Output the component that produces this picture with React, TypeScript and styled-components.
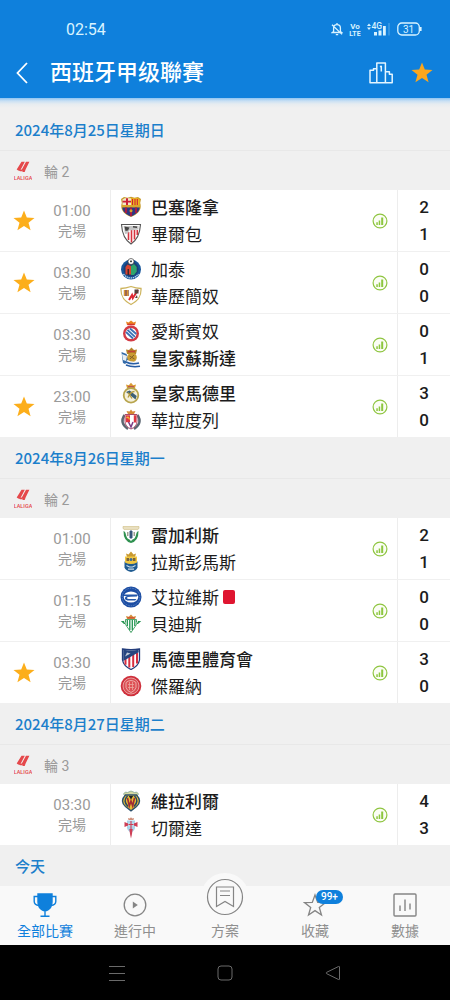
import React, { useState } from "react";
import styled, { createGlobalStyle } from "styled-components";

const BLUE = "#0f80dc";

const GlobalStyle = createGlobalStyle`
  *, *::before, *::after { box-sizing: border-box; }
  body {
    margin: 0;
    background: #f0f0f0;
    font-family: Roboto, "Noto Sans CJK TC", sans-serif;
    color: #1c1c1c;
  }
  button { font: inherit; color: inherit; background: none; border: 0; padding: 0; cursor: pointer; }
  h1, h2, h3, p, ul { margin: 0; padding: 0; }
  ul { list-style: none; }
  svg { display: block; }
`;

/* ---------- layout ---------- */

const Screen = styled.div`
  display: flex;
  flex-direction: column;
  height: 100vh;
`;

const Header = styled.header`
  flex: none;
  background: ${BLUE};
  color: #fff;
`;

const StatusBar = styled.div`
  display: flex;
  align-items: center;
  justify-content: space-between;
  height: 48px;
  padding: 10px 28px 0 66px;
  font-size: 16px;
  color: #d9f3ff;
`;

const StatusIcons = styled.div`
  display: flex;
  align-items: center;
  gap: 6px;
`;

const TitleBar = styled.div`
  display: flex;
  align-items: center;
  height: 50px;
  padding: 0 16px 0 10px;
`;

const IconButton = styled.button`
  display: flex;
  align-items: center;
  justify-content: center;
  width: 24px;
  height: 32px;
`;

const Title = styled.h1`
  flex: 1;
  padding-left: 16px;
  font-size: 22px;
  line-height: 34px;
  font-weight: 500;
`;

const Actions = styled.div`
  display: flex;
  gap: 17px;
`;

const Schedule = styled.main`
  flex: 1;
  min-height: 0;
  overflow-y: auto;
  scrollbar-width: none;
  padding-top: 12px;
  background: linear-gradient(#8fc4f1 0, #c9e0f4 3px, #e6ecf0 6px, #f0f0f0 10px);
`;

const DayTitle = styled.h2`
  padding: 0 15px;
  font-family: "Noto Sans CJK TC", sans-serif;
  font-size: 15px;
  line-height: 40px;
  font-weight: 500;
  color: #1c7fcb;
`;

const Round = styled.h3`
  display: flex;
  align-items: center;
  gap: 12px;
  height: 40px;
  padding: 0 14px;
  border-top: 1px solid #e8e8e8;
  font-size: 14px;
  font-weight: 400;
  color: #9a9a9a;
`;

const MatchRow = styled.li`
  display: flex;
  height: 62px;
  background: #fff;
  border-bottom: 1px solid #f0f0f0;
`;

const FavouriteCell = styled.button`
  display: flex;
  align-items: center;
  justify-content: center;
  width: 48px;
`;

const TimeCell = styled.div`
  display: flex;
  flex-direction: column;
  justify-content: center;
  align-items: center;
  width: 63px;
  padding-right: 14px;
  border-right: 1px solid #ededed;
  line-height: 20px;
  color: #9a9a9a;
`;

const Kickoff = styled.time`
  font-size: 15px;
`;

const Phase = styled.span`
  font-size: 14px;
`;

const Teams = styled.div`
  flex: 1;
  padding: 3px 0 0 9px;
`;

const Team = styled.div<{ $winner: boolean }>`
  display: flex;
  align-items: center;
  height: 27px;
  font-size: 17px;
  font-weight: ${(p) => (p.$winner ? 500 : 400)};
`;

const CrestSvg = styled.svg`
  width: 22px;
  height: 22px;
  margin-right: 9px;
`;

const RedCard = styled.span`
  width: 12px;
  height: 14px;
  margin-left: 4px;
  border-radius: 2px;
  background: #df1530;
`;

const StatsCell = styled.button`
  display: flex;
  align-items: center;
  justify-content: center;
  width: 34px;
`;

const Scores = styled.div`
  display: flex;
  flex-direction: column;
  align-items: center;
  width: 53px;
  padding-top: 4px;
  border-left: 1px solid #ededed;
  font-size: 17px;
  line-height: 27px;
  font-weight: 500;
`;

const TabBar = styled.nav`
  flex: none;
  display: flex;
  height: 59px;
  background: #f9f9f9;
`;

const Tab = styled.button<{ $active?: boolean }>`
  flex: 1;
  display: flex;
  flex-direction: column;
  align-items: center;
  justify-content: flex-end;
  padding-bottom: 4px;
  font-size: 14px;
  line-height: 20px;
  color: ${(p) => (p.$active ? BLUE : "#8f8f8f")};
`;

const TabIcon = styled.span`
  position: relative;
  flex: none;
  display: flex;
  align-items: center;
  justify-content: center;
  width: 26px;
  height: 32px;
`;

const RaisedIcon = styled.span`
  position: relative;
  flex: none;
  display: flex;
  align-items: center;
  justify-content: center;
  width: 48px;
  height: 48px;
  border-radius: 50%;
  background: #f9f9f9;
`;

const Badge = styled.span`
  position: absolute;
  top: 1px;
  left: 14px;
  padding: 0 5px;
  border-radius: 7px;
  background: ${BLUE};
  color: #fff;
  font-size: 10px;
  line-height: 14px;
  font-weight: 500;
`;

const SystemBar = styled.footer`
  flex: none;
  display: flex;
  align-items: center;
  justify-content: center;
  height: 55px;
  background: #000;
`;

const SystemButton = styled.button`
  display: flex;
  justify-content: center;
  width: 24%;
  padding: 12px 0;
`;

/* ---------- icons ---------- */

const Star = ({ size = 22, color = "#fcae1b" }: { size?: number; color?: string }) => (
  <svg width={size} height={size} viewBox="0 0 22 22" fill={color}>
    <path d="M11 .5l2.800 7 7.700.4-6 4.900 2.100 7.500L11 16.100l-6.600 4.200 2.100-7.500-6-4.900 7.700-.4z" />
  </svg>
);

const MutedBell = () => (
  <svg width="12" height="14" viewBox="0 0 12 14" fill="none" stroke="#d9f3ff" strokeWidth="1.300">
    <path d="M6 1v1.500M2.600 9.500V6a3.400 3.400 0 0 1 6.800 0v3.500l1.300 1H1.300zM4.800 12.600h2.400M1 2.800l10 9.600" />
  </svg>
);

const VoLte = () => (
  <svg width="12" height="14" viewBox="0 0 12 14" fill="#d9f3ff" fontFamily="Roboto, sans-serif" fontWeight="700" textAnchor="middle">
    <text x="6" y="6.500" fontSize="8">Vo</text>
    <text x="6" y="13.500" fontSize="7">LTE</text>
  </svg>
);

const Signal = () => (
  <svg width="24" height="14" viewBox="0 0 24 14" fill="#d9f3ff" fontFamily="Roboto, sans-serif" fontWeight="500">
    <path d="M0 4l2-2.500L4 4zM0 5.500L2 8l2-2.500z" />
    <text x="4.500" y="7" fontSize="8.500">4G</text>
    <path d="M7 10h3v3.500H7zM11.500 8.500h3v5h-3zM16 4h2.800v9.500H16z" />
    <path d="M21.500 1h1v12.500h-1z" opacity=".35" />
  </svg>
);

const Battery = () => (
  <svg width="25" height="14" viewBox="0 0 25 14" fill="none" stroke="#d9f3ff" strokeWidth="1.300">
    <rect x=".8" y="1" width="21.500" height="12" rx="4" />
    <path d="M23.800 5v4" strokeWidth="1.600" />
    <text x="11.500" y="10.500" fontSize="10" fontFamily="Roboto, sans-serif" fill="#d9f3ff" stroke="none" textAnchor="middle">31</text>
  </svg>
);

const BackIcon = () => (
  <svg width="12" height="22" viewBox="0 0 12 22" fill="none" stroke="#fff" strokeWidth="1.800">
    <path d="M11 1L1.500 11 11 21" />
  </svg>
);

const PodiumIcon = () => (
  <svg width="24" height="22" viewBox="0 0 24 22" fill="none" stroke="#e4f5ff" strokeWidth="1.500" strokeLinejoin="round">
    <path d="M7.800 20.800V1h8.600v19.800M7.800 6.800H4.500v1.400H1v12.600h22.200V12.200h-2.800V9.800h-4" />
    <path d="M11 4.800l1.300-.6v5.300" />
  </svg>
);

const StatsIcon = () => (
  <svg width="16" height="16" viewBox="0 0 16 16">
    <circle cx="8" cy="8" r="6.900" fill="#fbfdf5" stroke="#8fc541" strokeWidth="1.200" />
    <path d="M4.300 9.300h1.500V12H4.300zM6.700 7.500h1.500V12H6.700zM9.200 4.500h2V12h-2z" fill="#8cc63f" />
  </svg>
);

const LeagueLogo = () => (
  <svg width="18" height="20" viewBox="0 0 18 20" fill="#e5484b">
    <path d="M7.500.8h3.300L6.600 8.800q1 .2 1.500-.8L12 .8h3.400l-3.800 7.600-.9 2.500H8.200l.8-1.500Q7 11 5.300 9.800L4.200 9.500l-1.500-1z" />
    <text x="9" y="18.500" fontSize="5.500" fontWeight="500" fontFamily="Roboto, sans-serif" textAnchor="middle">LALIGA</text>
  </svg>
);

const TrophyIcon = () => (
  <svg width="24" height="24" viewBox="0 0 24 24" fill="none" stroke={BLUE} strokeWidth="1.400">
    <path d="M5 1h14v8c0 4-2 7-5.500 8.500h-3C7 16 5 13 5 9z" fill={BLUE} />
    <path d="M5 3.500H1.200v5q0 3.500 5 4M19 3.500h3.800v5q0 3.500-5 4M12 16v7M7.500 23.200h9" />
  </svg>
);

const PlayIcon = () => (
  <svg width="24" height="24" viewBox="0 0 24 24" fill="none" stroke="#858585" strokeWidth="1.300">
    <circle cx="12" cy="12" r="10.800" />
    <path d="M9.800 8.500v7l5-3.500z" fill="#858585" stroke="none" />
  </svg>
);

const TipsIcon = () => (
  <svg width="38" height="38" viewBox="0 0 38 38" fill="none" stroke="#858585" strokeWidth="1.200">
    <circle cx="19" cy="19" r="17.500" />
    <path d="M10.500 9h17v19.500l-8.500-5-8.500 5zM14 13h10M14 17.500h10" />
  </svg>
);

const OutlineStar = () => (
  <svg width="24" height="24" viewBox="0 0 24 24" fill="none" stroke="#858585" strokeWidth="1.300">
    <path d="M12 2l2.700 7.400 7.800.2-6.200 4.800 2.200 7.600-6.500-4.400L5.500 22l2.200-7.600-6.200-4.800 7.800-.2z" />
  </svg>
);

const DataIcon = () => (
  <svg width="24" height="24" viewBox="0 0 24 24" fill="none" stroke="#858585" strokeWidth="1.400">
    <rect x="1" y="1" width="22" height="22" rx="1" />
    <path d="M7 12.500V18M12 6.500V18M17 10.500V16.500" />
  </svg>
);

/* ---------- team crests, drawn on a 22 x 22 grid ---------- */

const crests: Record<string, React.ReactNode> = {
  barcelona: (
    <>
      <path d="M1 3L4 1l3.500.8L11 .8l3.500 1L18 1l3 2-.8 4c2 6-1.700 11-9.200 14C3.500 18-.2 13 1.800 7z" fill="#c79b2c" />
      <path d="M2.500 3.500l2-1.200H11V9H2.500z" fill="#f3e6c8" />
      <path d="M2.500 4.800H11v1.800H2.500zM6 2.300h2V9H6z" fill="#cc2138" />
      <path d="M11 2.300h6.500l2 1.200V9H11z" fill="#f3b51d" />
      <path d="M12.500 3v6M15 3v6M17.300 3v6" stroke="#c82237" strokeWidth="1.100" />
      <path d="M2 9h18v2.500H2z" fill="#d9a72b" />
      <path d="M2.200 11.500h17.600c-.7 4.200-3.700 7-8.800 8.900-5.100-1.900-8.100-4.700-8.800-8.900z" fill="#273a86" />
      <path d="M6 11.500V17M11 11.500V20M16 11.500V17" stroke="#a51c44" strokeWidth="2.200" />
      <circle cx="11" cy="14.800" r="1.500" fill="#d8a827" />
    </>
  ),
  athletic: (
    <>
      <path d="M1.500 1.500h19c-.5 8.500-2.500 15-9.500 19.500C4 16.500 2 10 1.500 1.500z" fill="#fff" stroke="#555" strokeWidth="1.100" />
      <path d="M8.500 9v8M11.500 7v12.500M14.500 7v9.500M17.300 7v5" stroke="#d6333f" strokeWidth="1.600" />
      <path d="M3.500 3h15v3.500L9 7.500l-.8 3L5 11z" fill="#c4c4c4" />
      <path d="M4.500 3.500l5 1-1.500 3L5.500 8zM13 3l4 .5V5l-4-.5z" fill="#444" />
    </>
  ),
  getafe: (
    <>
      <circle cx="11" cy="11.500" r="10" fill="#17569a" />
      <circle cx="11" cy="11" r="7.500" fill="#1c3f75" />
      <path d="M5.500 9l2-2.500L11 8v8.500H5.500z" fill="#d8432f" />
      <path d="M11 8l3-2 2.700 3v4.500L14 17h-3z" fill="#2fa56c" />
      <path d="M7.500 11h1.500v6H7.500z" fill="#40262b" />
      <circle cx="11" cy="3.500" r="3" fill="#fff" stroke="#222" strokeWidth=".6" />
      <path d="M10 3l1-.8 1 .8-.4 1.300h-1.200z" fill="#222" />
      <path d="M3.500 16q3 4 7.500 4t7.500-4" fill="none" stroke="#d9e9f6" strokeWidth="1.200" strokeDasharray="1.300 .8" />
    </>
  ),
  rayo: (
    <>
      <path d="M1 3.500q5-.2 10-2 5 1.800 10 2c.3 6-1 11.500-10 16C2 15 .7 9.500 1 3.500z" fill="#fff" stroke="#cdb45d" strokeWidth="1.300" />
      <path d="M3.800 5h5v6h-5z" fill="#9f654c" />
      <path d="M4.500 5v6M7.500 5v6" stroke="#d99831" />
      <path d="M9 15l3-5 .8 3L18 5" fill="none" stroke="#de2934" strokeWidth="2" />
      <path d="M14.500 4.500h4v4h-4zM15 13l2-3 .5 3z" fill="#56423d" />
    </>
  ),
  espanyol: (
    <>
      <path d="M7 5L6 1.500l2.500 1L11 .5l2.500 2 2.500-1L15 5z" fill="#e88422" />
      <path d="M7.500 4.500h7" stroke="#d83431" strokeWidth="1.500" />
      <circle cx="11" cy="13.500" r="8" fill="#d33b45" />
      <circle cx="11" cy="13.500" r="5.500" fill="#fff" />
      <path d="M6 12l7 6.500M7.500 9.800l7.500 7M10 8.500l6.300 5.500" stroke="#3c70b5" strokeWidth="1.800" />
    </>
  ),
  sociedad: (
    <>
      <path d="M1.500 5l5 2 2 6-1.500 5-4-2-.5-3z" fill="#326aa8" />
      <path d="M2 7l5 2-1 5-3-1z" fill="#e8eef2" />
      <path d="M7 7L6 2.500l3 .5 2.500-2.500L14 3l3-.5L16 7z" fill="#b58429" />
      <path d="M8 4.500h7" stroke="#c3423a" strokeWidth="1.600" />
      <circle cx="12" cy="10.500" r="4.800" fill="#c99c34" />
      <path d="M9.500 9l5 3M10 12l4-4" stroke="#86602a" />
      <path d="M7 13q6 3 12 1l.8 6Q12 21.500 5 18z" fill="#f5f7fa" />
      <path d="M6 15q6 3 13 1M6 18q6 2.500 14 1.300" fill="none" stroke="#275da5" strokeWidth="1.500" />
    </>
  ),
  realMadrid: (
    <>
      <path d="M7 6L6 2.500l2.800.7L11 .8l2.200 2.400 2.800-.7L15 6z" fill="#d99b35" />
      <path d="M8 4.800h6" stroke="#be4b54" strokeWidth="1.400" />
      <circle cx="11" cy="13.300" r="7.300" fill="#f4f0dc" stroke="#b8a54e" strokeWidth="1.800" />
      <path d="M6 10l9.500 7.500 1.200-3.500-7-5.500z" fill="#3d6078" />
      <path d="M8 15.500c2-5 4-6 6.500-6M8 10.500l4 6" fill="none" stroke="#b59a3d" strokeWidth="1.300" />
    </>
  ),
  valladolid: (
    <>
      <path d="M8 5L6.500 2l3 .5L11 .5l1.500 2 3-.5L14 5z" fill="#d68a34" />
      <path d="M4.500 6Q-1 14 8 20M17.500 6Q23 14 14 20" fill="none" stroke="#5b6671" strokeWidth="2.400" />
      <path d="M5 5.500h12v7q0 5-6 7.500-6-2.500-6-7.500z" fill="#fff" stroke="#a84a68" strokeWidth="1" />
      <path d="M5.800 6.200H10v7H5.800zM13.800 6.200h2.500v7.300h-2.500z" fill="#df3540" />
      <path d="M8.500 13l2.500 5 2-5" fill="none" stroke="#7c3a83" strokeWidth="1.500" />
      <path d="M6.500 9q2-2 3 1.500" fill="none" stroke="#f0b736" strokeWidth="1.300" />
    </>
  ),
  leganes: (
    <>
      <path d="M3 2.500h16v2L17 6H5L3 4.500z" fill="#e9dfbf" stroke="#cfbd83" strokeWidth=".6" />
      <path d="M5 6h12l-1 8-5 4.500L6 14z" fill="#fff" />
      <path d="M3.500 7q-.2 10 7.500 12 7.700-2 7.500-12-2 .5-2.500 4-1 4-3.500 4.500L11 17l-1.500-1.500Q7 15 6 11 5.500 7.500 3.500 7z" fill="#2f9150" />
      <path d="M9.500 7.500L11 6l1.500 1.500v6L11 15l-1.500-1.500z" fill="#36577a" />
      <path d="M7.800 8v4M14.200 8v4" stroke="#8b8b79" strokeWidth="1.200" />
    </>
  ),
  lasPalmas: (
    <>
      <path d="M7 6L6 2.500l2.500 1L11 .5l2.500 3 2.500-1L15 6z" fill="#c99a31" />
      <path d="M4.500 10.500h13v6q-1 3-6.500 4.500-5.500-1.500-6.500-4.500z" fill="#1f5b91" />
      <path d="M5 5.500h12v6q-6 3-12 0z" fill="#f0c642" />
      <path d="M6.500 7h2.500v3H6.500zM13 7h2.500v3H13z" fill="#7b6337" />
      <circle cx="11" cy="8.500" r="1.500" fill="#366ba0" />
      <path d="M6.500 14.500l3 1.500h3l3-1.500M8 18.200h6" fill="none" stroke="#cfe0ea" strokeWidth="1.200" />
    </>
  ),
  alaves: (
    <>
      <circle cx="11" cy="11" r="10.500" fill="#1c4da3" />
      <circle cx="11" cy="11" r="8.800" fill="none" stroke="#6f97cc" strokeWidth=".7" strokeDasharray="1.500 1" />
      <ellipse cx="11" cy="11" rx="7.300" ry="5.500" fill="#fff" />
      <path d="M4 8.500h14.300l-1.500 2-6.300.3q-3.500 0-3.500 1.200 0 1 2 1h7.500l-1.300 1.500H7.500Q4.500 14 5 11.800q.3-1.500 2.500-1.800H3.500z" fill="#2457a9" />
    </>
  ),
  betis: (
    <>
      <path d="M7 6L6 3l2.800.7L11 1.500l2.200 2.200L16 3l-1 3z" fill="#d68d38" />
      <path d="M7.500 4.800h7" stroke="#cc4b3a" strokeWidth="1.200" />
      <path d="M.8 8h20.400L18 11h-2l-5 8.500L6 11H4z" fill="#279653" />
      <path d="M5.500 6.500h11v5L11 19.500 5.500 11.500z" fill="#fff" stroke="#27904d" strokeWidth=".8" />
      <path d="M7.300 7v6M9.800 7v10M12.300 7v10M14.800 7v6" stroke="#219451" strokeWidth="1.300" />
      <path d="M4 7.500l1.500 3M18 7.500l-1.500 3" stroke="#dfeee1" />
    </>
  ),
  atletico: (
    <>
      <path d="M2.500 1q8.500 1.500 17 0v11q-1 6-8.500 9.500Q3.500 18 2.500 12z" fill="#fff" stroke="#243e7c" strokeWidth="1.300" />
      <path d="M5.500 11v5.800M9.300 8v11.500M13.200 6v13M17 5v10.500" stroke="#d72f40" strokeWidth="2" />
      <path d="M3.200 1.800q8 1.300 15.500 0v2.400L3.200 13z" fill="#27457f" />
      <path d="M5 8.500l2-4 3.500 1z" fill="#bfc9d8" />
    </>
  ),
  girona: (
    <>
      <circle cx="11" cy="11" r="10.300" fill="#cf2f3b" />
      <circle cx="11" cy="11" r="8" fill="#d94c52" stroke="#eeb5b2" strokeWidth=".8" />
      <path d="M6 7.500q5-4 10 0v5q-1 3.500-5 5-4-1.500-5-5z" fill="#de5155" stroke="#f2c3be" strokeWidth=".8" />
      <path d="M8 9.500h6M8 12.500h6M9.500 7v8M12.500 7v8" stroke="#eba59d" strokeWidth=".8" />
    </>
  ),
  villarreal: (
    <>
      <path d="M3.500 4q1.500-3 4-1.500L11 1l3.500 1.500q2.500-1.500 4 1.500L17 6H5z" fill="#d5d9a2" stroke="#84a99a" strokeWidth=".8" />
      <path d="M5.500 5h11q6 6 0 11.500L11 20.800 5.500 16.500q-6-5.500 0-11.500z" fill="#e8bd35" stroke="#2b4f6c" strokeWidth="1.400" />
      <path d="M7.500 6Q2.500 11 8 16.500M14.500 6Q19.500 11 14 16.500" fill="none" stroke="#254764" strokeWidth="1.500" />
      <path d="M7.500 8l1.800 8L11 11l1.700 5 1.800-8" fill="none" stroke="#a02c33" strokeWidth="1.600" />
      <path d="M8.800 6h4.400L11 9.500z" fill="#222" />
    </>
  ),
  celta: (
    <>
      <path d="M8.500 3L8 1l1.800.6L11 .3l1.200 1.300L14 1l-.5 2z" fill="#cf8f79" />
      <path d="M7 3.500h8v7q0 3-4 5-4-2-4-5z" fill="#a9d3ea" />
      <path d="M4.500 5l3 1.300h7l3-1.300v5l-3-1.300h-7L4.500 10z" fill="#ce3e56" />
      <path d="M8 5.500h6v4H8z" fill="#b9dced" />
      <path d="M9.300 12h3.400L11.800 18 11 21.500 10.200 18z" fill="#ce3e56" />
      <path d="M11 4v8M8.500 7.500h5" stroke="#ce3e56" strokeWidth="1.100" />
    </>
  ),
};

/* ---------- data ---------- */

interface Side {
  name: string;
  crest: string;
  score: number;
  redCard?: boolean;
}
interface Match {
  time: string;
  starred?: boolean;
  home: Side;
  away: Side;
}
interface Day {
  date: string;
  round: string;
  matches: Match[];
}

const side = (name: string, crest: string, score: number, redCard = false): Side => ({ name, crest, score, redCard });

const days: Day[] = [
  {
    date: "2024年8月25日星期日",
    round: "輪 2",
    matches: [
      { time: "01:00", starred: true, home: side("巴塞隆拿", "barcelona", 2), away: side("畢爾包", "athletic", 1) },
      { time: "03:30", starred: true, home: side("加泰", "getafe", 0), away: side("華歷簡奴", "rayo", 0) },
      { time: "03:30", home: side("愛斯賓奴", "espanyol", 0), away: side("皇家蘇斯達", "sociedad", 1) },
      { time: "23:00", starred: true, home: side("皇家馬德里", "realMadrid", 3), away: side("華拉度列", "valladolid", 0) },
    ],
  },
  {
    date: "2024年8月26日星期一",
    round: "輪 2",
    matches: [
      { time: "01:00", home: side("雷加利斯", "leganes", 2), away: side("拉斯彭馬斯", "lasPalmas", 1) },
      { time: "01:15", home: side("艾拉維斯", "alaves", 0, true), away: side("貝迪斯", "betis", 0) },
      { time: "03:30", starred: true, home: side("馬德里體育會", "atletico", 3), away: side("傑羅納", "girona", 0) },
    ],
  },
  {
    date: "2024年8月27日星期二",
    round: "輪 3",
    matches: [{ time: "03:30", home: side("維拉利爾", "villarreal", 4), away: side("切爾達", "celta", 3) }],
  },
];

const TeamLine = ({ team, rival }: { team: Side; rival: Side }) => (
  <Team $winner={team.score > rival.score}>
    <CrestSvg viewBox="0 0 22 22" aria-hidden="true">{crests[team.crest]}</CrestSvg>
    {team.name}
    {team.redCard && <RedCard role="img" aria-label="紅牌" />}
  </Team>
);

const MatchItem = ({ match }: { match: Match }) => {
  const [starred, setStarred] = useState(Boolean(match.starred));
  return (
    <MatchRow>
      <FavouriteCell aria-label="收藏" aria-pressed={starred} onClick={() => setStarred(!starred)}>
        {starred && <Star />}
      </FavouriteCell>
      <TimeCell>
        <Kickoff>{match.time}</Kickoff>
        <Phase>完場</Phase>
      </TimeCell>
      <Teams>
        <TeamLine team={match.home} rival={match.away} />
        <TeamLine team={match.away} rival={match.home} />
      </Teams>
      <StatsCell aria-label="數據">
        <StatsIcon />
      </StatsCell>
      <Scores>
        <span>{match.home.score}</span>
        <span>{match.away.score}</span>
      </Scores>
    </MatchRow>
  );
};

export default function App() {
  return (
    <Screen>
      <GlobalStyle />
      <Header>
        <StatusBar>
          <time>02:54</time>
          <StatusIcons>
            <MutedBell />
            <VoLte />
            <Signal />
            <Battery />
          </StatusIcons>
        </StatusBar>
        <TitleBar>
          <IconButton aria-label="返回"><BackIcon /></IconButton>
          <Title>西班牙甲级聯賽</Title>
          <Actions>
            <IconButton aria-label="積分榜"><PodiumIcon /></IconButton>
            <IconButton aria-label="收藏聯賽"><Star color="#fba61c" /></IconButton>
          </Actions>
        </TitleBar>
      </Header>

      <Schedule>
        {days.map((day) => (
          <section key={day.date}>
            <DayTitle>{day.date}</DayTitle>
            <Round>
              <LeagueLogo />
              {day.round}
            </Round>
            <ul>
              {day.matches.map((match) => (
                <MatchItem key={match.home.name} match={match} />
              ))}
            </ul>
          </section>
        ))}
        <DayTitle>今天</DayTitle>
      </Schedule>

      <TabBar>
        <Tab $active aria-current="page">
          <TabIcon><TrophyIcon /></TabIcon>
          全部比賽
        </Tab>
        <Tab>
          <TabIcon><PlayIcon /></TabIcon>
          進行中
        </Tab>
        <Tab>
          <RaisedIcon><TipsIcon /></RaisedIcon>
          方案
        </Tab>
        <Tab>
          <TabIcon>
            <OutlineStar />
            <Badge>99+</Badge>
          </TabIcon>
          收藏
        </Tab>
        <Tab>
          <TabIcon><DataIcon /></TabIcon>
          數據
        </Tab>
      </TabBar>

      <SystemBar>
        <SystemButton aria-label="最近使用">
          <svg width="16" height="16" viewBox="0 0 16 16" stroke="#6a6a6a" strokeWidth="1">
            <path d="M0 1.500h16M0 8.500h16M0 15.500h16" />
          </svg>
        </SystemButton>
        <SystemButton aria-label="主畫面">
          <svg width="16" height="16" viewBox="0 0 16 16" fill="none" stroke="#6a6a6a" strokeWidth="1">
            <rect x="1" y="1" width="14" height="14" rx="3" />
          </svg>
        </SystemButton>
        <SystemButton aria-label="上一頁">
          <svg width="16" height="16" viewBox="0 0 16 16" fill="none" stroke="#6a6a6a" strokeWidth="1" strokeLinejoin="round">
            <path d="M14.500 2v12q0 1-1 .5L1.500 8.600q-1-.6 0-1.200l12-5.900q1-.5 1 .5z" />
          </svg>
        </SystemButton>
      </SystemBar>
    </Screen>
  );
}
